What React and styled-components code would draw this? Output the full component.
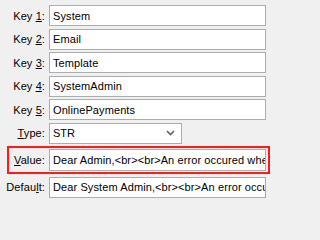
import React from 'react';
import styled, { createGlobalStyle } from 'styled-components';

const GlobalStyle = createGlobalStyle`
  html, body {
    margin: 0;
    padding: 0;
    background: #f0f0f0;
  }
  body {
    font-family: 'Liberation Sans', Arial, sans-serif;
    font-size: 11px;
    color: #000;
  }
`;

const Form = styled.div`
  width: 271px;
  height: 202px;
  box-sizing: border-box;
  padding-top: 5px;
  display: flex;
  flex-direction: column;
  gap: 2.5px;
  overflow: hidden;
`;

const Row = styled.div`
  display: grid;
  grid-template-columns: 45px auto;
  column-gap: 4px;
  align-items: center;
  box-sizing: border-box;
  ${p => p.$highlight && `
    margin: 0 1px 0 7px;
    grid-template-columns: 36px auto;
    border: 2px solid #ff1a1a;
    padding: 1px 2px 1px 0;
  `}
`;

const Label = styled.label`
  text-align: right;
  white-space: nowrap;
  color: #000;
  letter-spacing: 0.1px;
  u {
    text-decoration: underline;
    text-underline-offset: 1px;
  }
`;

const Field = styled.div`
  width: 217px;
  height: ${p => p.$tall ? 22 : 21}px;
  box-sizing: border-box;
  border: 1px solid #adadad;
  background: #fff;
  padding: 0 3px;
  display: flex;
  align-items: center;
  white-space: nowrap;
  overflow: hidden;
  letter-spacing: 0.1px;
`;

const Select = styled.div`
  width: 133px;
  height: 21px;
  box-sizing: border-box;
  border: 1px solid #adadad;
  background: #fff;
  padding: 0 3px;
  display: flex;
  align-items: center;
  justify-content: space-between;
`;

const Chevron = () => (
  <svg width="9" height="6" viewBox="0 0 9 6" style={{ marginRight: 3 }}>
    <path d="M1 1 L4.5 4.5 L8 1" fill="none" stroke="#606060" strokeWidth="1.6" />
  </svg>
);

const keys = ['System', 'Email', 'Template', 'SystemAdmin', 'OnlinePayments'];

export default function App() {
  return (
    <>
      <GlobalStyle />
      <Form>
        {keys.map((k, i) => (
          <Row key={i}>
            <Label>Key <u>{i + 1}</u>:</Label>
            <Field>{k}</Field>
          </Row>
        ))}
        <Row>
          <Label><u>T</u>ype:</Label>
          <Select>
            <span>STR</span>
            <Chevron />
          </Select>
        </Row>
        <Row $highlight>
          <Label><u>V</u>alue:</Label>
          <Field $tall>Dear Admin,&lt;br&gt;&lt;br&gt;An error occured when processing</Field>
        </Row>
        <Row>
          <Label>Defau<u>l</u>t:</Label>
          <Field>Dear System Admin,&lt;br&gt;&lt;br&gt;An error occured when processing</Field>
        </Row>
      </Form>
    </>
  );
}
